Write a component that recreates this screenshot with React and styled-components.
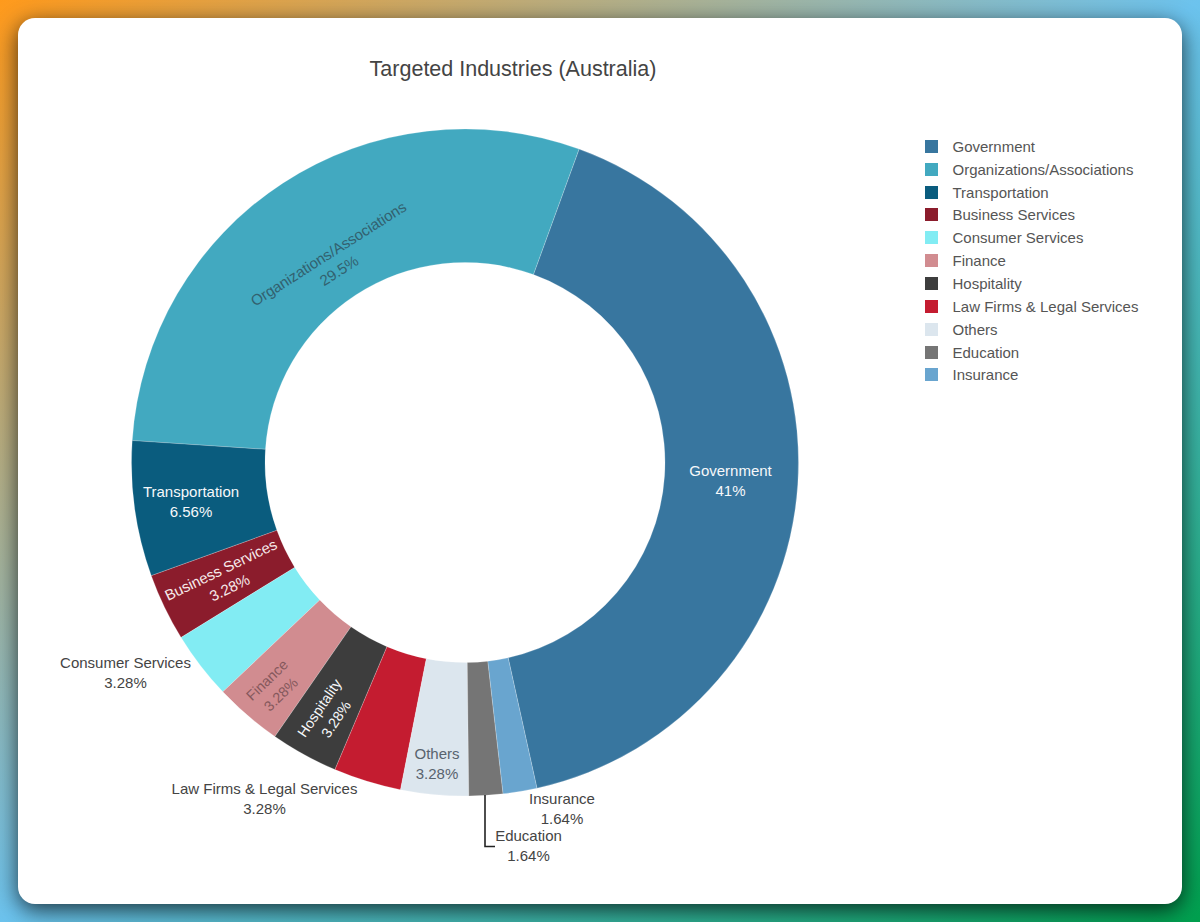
import React from "react";
import styled, { createGlobalStyle } from "styled-components";

const Global = createGlobalStyle`
  html, body { margin: 0; padding: 0; }
  body { font-family: "Liberation Sans", Arial, sans-serif; }
`;

const Page = styled.div`
  box-sizing: border-box;
  width: 1200px;
  height: 922px;
  padding: 18px;
  background: linear-gradient(to bottom right, #ff9a1c 0%, #6cc3ee 50%, #00a04e 100%);
  overflow: hidden;
`;

const Card = styled.section`
  box-sizing: border-box;
  height: 886px;
  background: #fff;
  border-radius: 17px;
  box-shadow: 0 6px 22px rgba(0, 0, 0, 0.72);
  padding-top: 36.5px;
`;

const Title = styled.h2`
  width: 990px;
  height: 28px;
  margin: 0 0 17.5px;
  font-size: 21.5px;
  line-height: 28px;
  font-weight: 400;
  text-align: center;
  color: #444;
`;

const Body = styled.div`
  display: flex;
  align-items: flex-start;
`;

const Chart = styled.svg`
  display: block;
  flex: none;
  width: 890px;
  height: 804px;
  overflow: visible;
`;

const Slice = styled.path`
  fill: ${(p) => p.$color};
  stroke: #fff;
  stroke-opacity: 0.35;
  stroke-width: 0.6;
`;

const Label = styled.text`
  font-size: ${(p) => (p.$tight ? "14.4px" : "15px")};
  text-anchor: middle;
  fill: ${(p) => p.$color};
`;

const Leader = styled.path`
  fill: none;
  stroke: #222;
  stroke-width: 1.6;
`;

const Legend = styled.ul`
  list-style: none;
  margin: 0;
  padding: 35px 0 0 17px;
`;

const LegendRow = styled.li`
  display: flex;
  align-items: center;
  height: 22.85px;
  font-size: 15px;
  color: #555;
  white-space: nowrap;
`;

const Swatch = styled.span`
  flex: none;
  width: 13px;
  height: 13px;
  margin-right: 14.5px;
  background: ${(p) => p.$color};
`;

const CX = 465;
const CY = 462.5;
const R = 333.5;
const r = 200;
const TOTAL = 61;
const START = 20;

const INK = "#444";
const WHITE = "#f6f8fa";

const data = [
  { name: "Government", value: 25, color: "#38769f" },
  { name: "Organizations/Associations", value: 18, color: "#42a9c0" },
  { name: "Transportation", value: 4, color: "#0a5c7e" },
  { name: "Business Services", value: 2, color: "#8b1c2c" },
  { name: "Consumer Services", value: 2, color: "#82ecf3" },
  { name: "Finance", value: 2, color: "#d18c90" },
  { name: "Hospitality", value: 2, color: "#3d3d3d" },
  { name: "Law Firms & Legal Services", value: 2, color: "#c41c30" },
  { name: "Others", value: 2, color: "#dce6ee" },
  { name: "Education", value: 1, color: "#757575" },
  { name: "Insurance", value: 1, color: "#69a5cf" },
];

const labels = [
  { name: "Government", pct: "41%", x: 730.5, y: 470.5, rot: 0, color: WHITE },
  { name: "Organizations/Associations", pct: "29.5%", x: 328.5, y: 254, rot: -32.5, color: "#32616f" },
  { name: "Transportation", pct: "6.56%", x: 191, y: 491.5, rot: 0, color: WHITE },
  { name: "Business Services", pct: "3.28%", x: 221, y: 570, rot: -25.7, color: "#f6e9ea" },
  { name: "Consumer Services", pct: "3.28%", x: 125.5, y: 663, rot: 0, color: INK },
  { name: "Finance", pct: "3.28%", x: 267, y: 680, rot: -44, color: "#85585c", tight: true },
  { name: "Hospitality", pct: "3.28%", x: 319.5, y: 708, rot: -56, color: WHITE, tight: true },
  { name: "Law Firms & Legal Services", pct: "3.28%", x: 264.5, y: 788.5, rot: 0, color: INK },
  { name: "Others", pct: "3.28%", x: 437, y: 754, rot: 0, color: "#58636e" },
  { name: "Insurance", pct: "1.64%", x: 562, y: 799, rot: 0, color: INK },
  { name: "Education", pct: "1.64%", x: 528.5, y: 836, rot: 0, color: INK },
];

const polar = (radius, deg) => {
  const a = (deg * Math.PI) / 180;
  return [CX + radius * Math.sin(a), CY - radius * Math.cos(a)];
};

const arc = (from, to) => {
  const [x1, y1] = polar(R, from);
  const [x2, y2] = polar(R, to);
  const [x3, y3] = polar(r, to);
  const [x4, y4] = polar(r, from);
  const large = to - from > 180 ? 1 : 0;
  return `M${x1} ${y1}A${R} ${R} 0 ${large} 1 ${x2} ${y2}L${x3} ${y3}A${r} ${r} 0 ${large} 0 ${x4} ${y4}Z`;
};

const slices = (() => {
  let end = START + (25 / TOTAL) * 360;
  return data.map((d) => {
    const sweep = (d.value / TOTAL) * 360;
    const path = arc(end - sweep, end);
    end -= sweep;
    return { ...d, path };
  });
})();

export default function App() {
  return (
    <Page>
      <Global />
      <Card>
        <Title>Targeted Industries (Australia)</Title>
        <Body>
          <Chart viewBox="18 100 890 804">
            {slices.map((s) => (
              <Slice key={s.name} d={s.path} $color={s.color} />
            ))}
            <Leader d="M485 795V846.5H495" />
            {labels.map((l) => (
              <g key={l.name} transform={`translate(${l.x} ${l.y}) rotate(${l.rot})`}>
                <Label y={5} $color={l.color} $tight={l.tight}>{l.name}</Label>
                <Label y={25} $color={l.color} $tight={l.tight}>{l.pct}</Label>
              </g>
            ))}
          </Chart>
          <Legend>
            {data.map((d) => (
              <LegendRow key={d.name}>
                <Swatch $color={d.color} />
                {d.name}
              </LegendRow>
            ))}
          </Legend>
        </Body>
      </Card>
    </Page>
  );
}
